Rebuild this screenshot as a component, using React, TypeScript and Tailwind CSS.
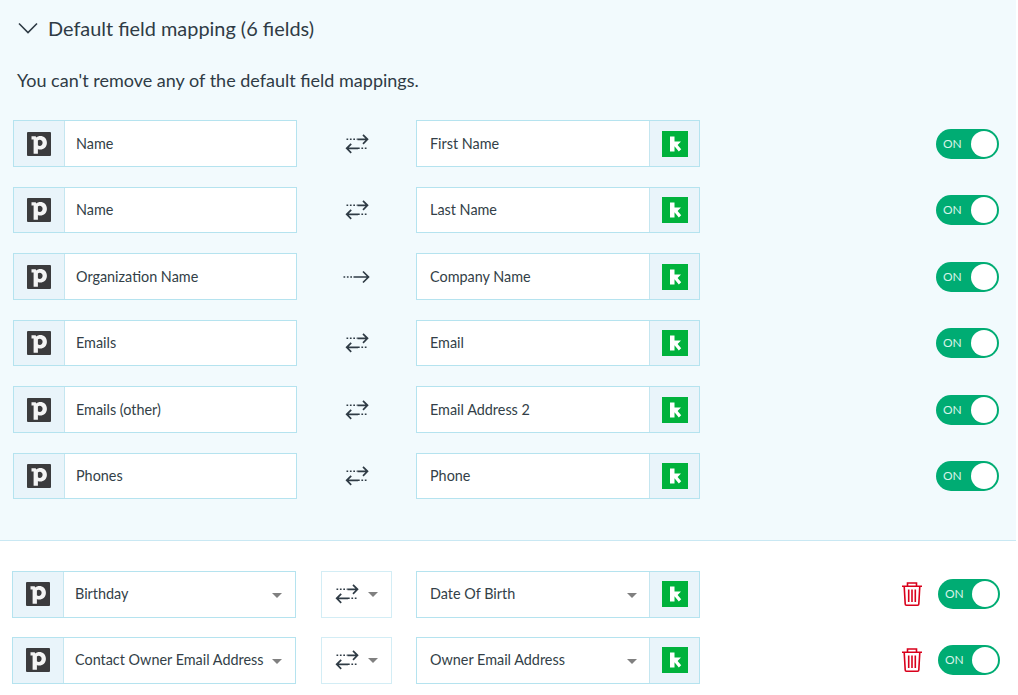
const defaultRows = [
  { left: "Name", right: "First Name", oneWay: false },
  { left: "Name", right: "Last Name", oneWay: false },
  { left: "Organization Name", right: "Company Name", oneWay: true },
  { left: "Emails", right: "Email", oneWay: false },
  { left: "Emails (other)", right: "Email Address 2", oneWay: false },
  { left: "Phones", right: "Phone", oneWay: false },
];

const customRows = [
  { left: "Birthday", right: "Date Of Birth" },
  { left: "Contact Owner Email Address", right: "Owner Email Address" },
];

function PipedriveLogo() {
  return (
    <svg width="24" height="24" viewBox="0 0 24 24" className="shrink-0">
      <rect width="24" height="24" rx="1" fill="#3b3b3d" />
      <path
        d="M4.5 4.2H8.6L9.4 5.6C10.4 4.6 11.6 4.1 13.2 4.1C17 4.1 19.9 6.8 19.9 10.8C19.9 14.8 17 17.6 13.2 17.6C12.2 17.6 11.4 17.4 10.9 17V21.8H6.6V7.4H4.5Z M10.9 8.4V13.3C11.4 13.8 12 14 12.7 14C14.4 14 15.6 12.7 15.6 10.8C15.6 9 14.4 7.7 12.7 7.7C12 7.7 11.4 8 10.9 8.4Z"
        fill="#f4f4f4"
        fillRule="evenodd"
      />
    </svg>
  );
}

function KLogo() {
  return (
    <svg width="26" height="26" viewBox="0 0 26 26" className="shrink-0">
      <rect width="26" height="26" fill="#00b23c" />
      <path d="M8 5.5h4.5V10.5H19l-3.4 3.4 3.6 4.3-2.4 2.2-4.3-5.2v5.3H8z" fill="#fff" />
    </svg>
  );
}

function SyncArrows() {
  return (
    <svg width="24" height="20" viewBox="0 0 24 20" fill="none" stroke="#2f3b45" strokeWidth="1.7">
      <path d="M1.5 5.3h11" strokeDasharray="1.7 1.7" strokeWidth="1.5" />
      <path d="M12.5 5.3h10M18 .8l4.5 4.5L18 9.8" />
      <path d="M2 14.3h11M6.2 9.8l-4.5 4.5 4.5 4.5" />
      <path d="M13 14.3h10" strokeDasharray="1.7 1.7" strokeWidth="1.5" />
    </svg>
  );
}

function OneWayArrow() {
  return (
    <svg width="28" height="14" viewBox="0 0 28 14" fill="none" stroke="#2f3b45" strokeWidth="1.7">
      <path d="M.5 7h10" strokeDasharray="1.7 1.7" strokeWidth="1.5" />
      <path d="M10.5 7h15M20 1.5 25.5 7 20 12.5" />
    </svg>
  );
}

function Caret({ low }: { low?: boolean }) {
  return (
    <span
      className={
        low
          ? "mt-[3px] shrink-0 border-x-[5px] border-t-[5px] border-x-transparent border-t-[#808080]"
          : "shrink-0 border-x-[5px] border-t-[5px] border-x-transparent border-t-[#808080]"
      }
    />
  );
}

function Toggle({ narrow }: { narrow?: boolean }) {
  return (
    <div
      className={
        narrow
          ? "flex h-[30px] w-[62px] items-center justify-between rounded-full bg-[#00ac73] pl-[7px] pr-[2px]"
          : "flex h-[30px] w-[63px] items-center justify-between rounded-full bg-[#00ac73] pl-[7px] pr-[2px]"
      }
    >
      <span className="text-[12px] text-[#d6f3e8]">ON</span>
      <span className="size-[26px] rounded-full bg-white" />
    </div>
  );
}

function TrashIcon() {
  return (
    <svg width="20" height="24" viewBox="0 0 20 24" fill="none" stroke="#d9001b" strokeWidth="1.6">
      <path d="M0 4.3h20M5.5 4.3V1h9v3.3" />
      <path d="M2.2 4.3 3.2 22c0 .7.5 1.2 1.2 1.2h11.2c.7 0 1.2-.5 1.2-1.2l1-17.7" />
      <path d="M6.7 7.5v12.5M10 7.5v12.5M13.3 7.5v12.5" />
    </svg>
  );
}

function FieldBox({ side, label, caret }: { side: "left" | "right"; label: string; caret?: boolean }) {
  if (side === "left") {
    return (
      <div className="flex h-full w-[284px] shrink-0 items-center border border-[#b5e3ef] bg-white">
        <div className="flex h-full w-[50px] shrink-0 items-center justify-center bg-[#e9f4fa]">
          <PipedriveLogo />
        </div>
        <div className="h-full w-px bg-[#c5e6f0]" />
        <div className="flex min-w-0 flex-1 items-center justify-between pl-[11px] pr-[13px] text-[14.4px] text-[#333f48]">
          <span className="whitespace-nowrap">{label}</span>
          {caret && <Caret low />}
        </div>
      </div>
    );
  }
  return (
    <div className="flex h-full w-[284px] shrink-0 items-center border border-[#b5e3ef] bg-white">
      <div className="flex min-w-0 flex-1 items-center justify-between pl-[13px] pr-[12px] text-[14.4px] text-[#333f48]">
        <span className="whitespace-nowrap">{label}</span>
        {caret && <Caret low />}
      </div>
      <div className="h-full w-px bg-[#c5e6f0]" />
      <div className="flex h-full w-[49px] shrink-0 items-center justify-center bg-[#e9f4fa]">
        <KLogo />
      </div>
    </div>
  );
}

export default function App() {
  return (
    <div className="h-[695px] w-[1018px] overflow-hidden bg-white font-['Lato',sans-serif] text-[#2f3b45]">
      {/* Default mappings */}
      <section className="h-[541px] w-[1016px] border-b border-[#c9e8f3] bg-[#f2fafd]">
        <div className="flex items-center gap-[10px] pl-[18px] pt-[13px]">
          <svg width="20" height="12" viewBox="0 0 20 12" fill="none" stroke="#2f3b45" strokeWidth="1.6">
            <path d="M1 1.5l9 9 9-9" />
          </svg>
          <h2 className="text-[19.9px] leading-[30px]">Default field mapping (6 fields)</h2>
        </div>
        <p className="pl-[17px] pt-[23px] text-[18px] leading-[28px]">You can't remove any of the default field mappings.</p>
        <div className="flex flex-col gap-5 pl-[13px] pt-[26.25px]">
          {defaultRows.map((row, i) => (
            <div key={i} className="flex h-[46.5px] items-center">
              <FieldBox side="left" label={row.left} />
              <div className="flex w-[119px] shrink-0 justify-center">
                {row.oneWay ? <OneWayArrow /> : <SyncArrows />}
              </div>
              <FieldBox side="right" label={row.right} />
              <div className="ml-auto pr-[17px]">
                <Toggle />
              </div>
            </div>
          ))}
        </div>
      </section>

      {/* Custom mappings */}
      <div className="flex flex-col gap-[19.5px] pl-3 pt-[30px]">
        {customRows.map((row, i) => (
          <div key={i} className="flex h-[46.5px] items-center">
            <FieldBox side="left" label={row.left} caret />
            <div className="ml-[25px] flex h-full w-[71px] shrink-0 items-center justify-center gap-[9px] border border-[#d3edf5]">
              <SyncArrows />
              <Caret />
            </div>
            <div className="ml-6 h-full">
              <FieldBox side="right" label={row.right} caret />
            </div>
            <div className="ml-auto flex items-center gap-4 pr-[18px]">
              <TrashIcon />
              <Toggle narrow />
            </div>
          </div>
        ))}
      </div>
    </div>
  );
}
